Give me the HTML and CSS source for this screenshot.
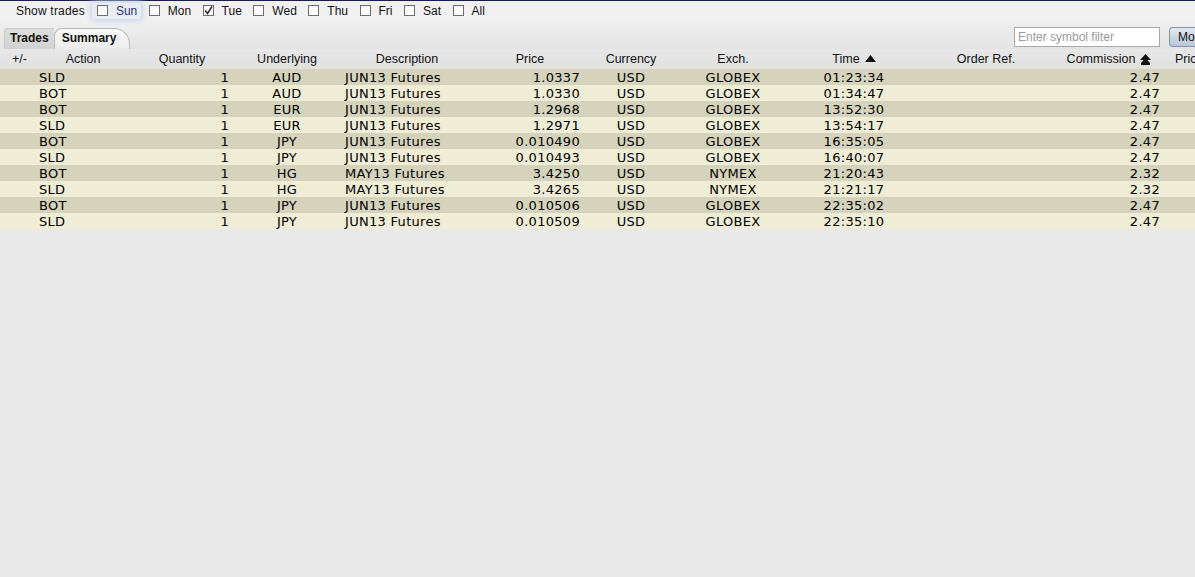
FILE: index.html
```html
<!DOCTYPE html>
<html>
<head>
<meta charset="utf-8">
<link rel="stylesheet" href="styles.css">
</head>
<body>
<div class="topbar">
  <span class="lbl">Show trades</span>
  <span class="opt focus"><span class="box"></span>Sun</span>
  <span class="opt"><span class="box"></span>Mon</span>
  <span class="opt"><span class="box checked"><svg width="9" height="9" viewBox="0 0 9 9"><path d="M1 4.5 L3.5 7.5 L8 0.5" fill="none" stroke="#222" stroke-width="1.4"/></svg></span>Tue</span>
  <span class="opt"><span class="box"></span>Wed</span>
  <span class="opt"><span class="box"></span>Thu</span>
  <span class="opt"><span class="box"></span>Fri</span>
  <span class="opt"><span class="box"></span>Sat</span>
  <span class="opt"><span class="box"></span>All</span>
</div>
<div class="tabstrip">
  <div class="tabs">
    <span class="tab trades">Trades</span>
    <span class="tab summary">Summary</span>
  </div>
  <div class="tools">
    <input class="filter" type="text" placeholder="Enter symbol filter">
    <span class="morebtn">Mo</span>
  </div>
</div>
<div class="table">
  <div class="hdr">
    <span class="h c-pm">+/-</span>
    <span class="h">Action</span>
    <span class="h">Quantity</span>
    <span class="h">Underlying</span>
    <span class="h">Description</span>
    <span class="h">Price</span>
    <span class="h">Currency</span>
    <span class="h">Exch.</span>
    <span class="h">Time <svg class="arr" width="11" height="7" viewBox="0 0 11 7"><path d="M5.5 0 L11 7 L0 7 Z" fill="#111"/></svg></span>
    <span class="h">Order Ref.</span>
    <span class="h">Commission <svg class="arr2" width="11" height="11" viewBox="0 0 11 11"><path d="M5.5 0 L11 6 L0 6 Z" fill="#111"/><path d="M5.5 4 L10 9 L1 9 Z" fill="#111"/><rect x="1" y="9" width="9" height="2" fill="#111"/></svg></span>
    <span class="h c-last">Pric</span>
  </div>
  <div class="row dark"><span></span><span class="act">SLD</span><span class="qty">1</span><span class="ctr">AUD</span><span class="desc">JUN13 Futures</span><span class="price">1.0337</span><span class="ctr">USD</span><span class="ctr">GLOBEX</span><span class="ctr">01:23:34</span><span></span><span class="comm">2.47</span><span></span></div>
  <div class="row light"><span></span><span class="act">BOT</span><span class="qty">1</span><span class="ctr">AUD</span><span class="desc">JUN13 Futures</span><span class="price">1.0330</span><span class="ctr">USD</span><span class="ctr">GLOBEX</span><span class="ctr">01:34:47</span><span></span><span class="comm">2.47</span><span></span></div>
  <div class="row dark"><span></span><span class="act">BOT</span><span class="qty">1</span><span class="ctr">EUR</span><span class="desc">JUN13 Futures</span><span class="price">1.2968</span><span class="ctr">USD</span><span class="ctr">GLOBEX</span><span class="ctr">13:52:30</span><span></span><span class="comm">2.47</span><span></span></div>
  <div class="row light"><span></span><span class="act">SLD</span><span class="qty">1</span><span class="ctr">EUR</span><span class="desc">JUN13 Futures</span><span class="price">1.2971</span><span class="ctr">USD</span><span class="ctr">GLOBEX</span><span class="ctr">13:54:17</span><span></span><span class="comm">2.47</span><span></span></div>
  <div class="row dark"><span></span><span class="act">BOT</span><span class="qty">1</span><span class="ctr">JPY</span><span class="desc">JUN13 Futures</span><span class="price">0.010490</span><span class="ctr">USD</span><span class="ctr">GLOBEX</span><span class="ctr">16:35:05</span><span></span><span class="comm">2.47</span><span></span></div>
  <div class="row light"><span></span><span class="act">SLD</span><span class="qty">1</span><span class="ctr">JPY</span><span class="desc">JUN13 Futures</span><span class="price">0.010493</span><span class="ctr">USD</span><span class="ctr">GLOBEX</span><span class="ctr">16:40:07</span><span></span><span class="comm">2.47</span><span></span></div>
  <div class="row dark"><span></span><span class="act">BOT</span><span class="qty">1</span><span class="ctr">HG</span><span class="desc">MAY13 Futures</span><span class="price">3.4250</span><span class="ctr">USD</span><span class="ctr">NYMEX</span><span class="ctr">21:20:43</span><span></span><span class="comm">2.32</span><span></span></div>
  <div class="row light"><span></span><span class="act">SLD</span><span class="qty">1</span><span class="ctr">HG</span><span class="desc">MAY13 Futures</span><span class="price">3.4265</span><span class="ctr">USD</span><span class="ctr">NYMEX</span><span class="ctr">21:21:17</span><span></span><span class="comm">2.32</span><span></span></div>
  <div class="row dark"><span></span><span class="act">BOT</span><span class="qty">1</span><span class="ctr">JPY</span><span class="desc">JUN13 Futures</span><span class="price">0.010506</span><span class="ctr">USD</span><span class="ctr">GLOBEX</span><span class="ctr">22:35:02</span><span></span><span class="comm">2.47</span><span></span></div>
  <div class="row light"><span></span><span class="act">SLD</span><span class="qty">1</span><span class="ctr">JPY</span><span class="desc">JUN13 Futures</span><span class="price">0.010509</span><span class="ctr">USD</span><span class="ctr">GLOBEX</span><span class="ctr">22:35:10</span><span></span><span class="comm">2.47</span><span></span></div>
</div>
</body>
</html>
```
FILE: styles.css
```css
html, body {
  margin: 0;
  padding: 0;
}
body {
  width: 1195px;
  height: 577px;
  overflow: hidden;
  background: #e9e9e9;
  font-family: "Liberation Sans", Arial, sans-serif;
  color: #111;
}
.topbar {
  height: 20px;
  border-top: 1px solid #1c1c4c;
  background: #f1f1f1;
  display: flex;
  align-items: center;
  padding-left: 16px;
  font-size: 12px;
  box-sizing: border-box;
}
.lbl {
  margin-right: 7px;
  letter-spacing: 0.2px;
}
.opt {
  display: flex;
  align-items: center;
  padding: 1px 4px 1px 5px;
  margin-right: 2.5px;
}
.opt.focus {
  box-shadow: 0 0 6px 2px #c9d5ea;
  background: #e8ecf3;
  border-radius: 3px;
  color: #28367a;
}
.box {
  width: 9px;
  height: 9px;
  border: 1px solid #6d6d6d;
  background: #fff;
  margin-right: 8px;
  display: flex;
  align-items: center;
  justify-content: center;
}
.tabstrip {
  height: 29px;
  background: linear-gradient(#f1f1f1, #e3e3e3);
  display: flex;
  justify-content: space-between;
  align-items: flex-end;
}
.tabs {
  display: flex;
  align-items: flex-end;
  padding-left: 4px;
}
.tab {
  font-weight: bold;
  font-size: 12px;
  height: 21px;
  line-height: 18px;
  box-sizing: border-box;
}
.tab.trades {
  background: linear-gradient(#dedede, #d2d2d2);
  padding: 0 5px 0 5px;
  border-radius: 4px 0 0 0;
  border: 1px solid #c9c9c9;
  border-bottom: none;
  border-right: none;
}
.tab.summary {
  background: linear-gradient(#fafafa, #ececec);
  padding: 0 13px 0 7px;
  border: 1px solid #b9b9b9;
  border-bottom: none;
  border-radius: 8px 16px 0 0;
}
.tools {
  display: flex;
  align-items: center;
  padding-bottom: 2px;
}
.filter {
  width: 146px;
  height: 20px;
  box-sizing: border-box;
  border: 1px solid #aaa;
  background: #fff;
  font-family: "Liberation Sans", Arial, sans-serif;
  font-size: 12px;
  padding: 0 3px;
  margin: 0 9px 0 0;
  outline: none;
}
.filter::placeholder {
  color: #9a9a9a;
}
.morebtn {
  width: 26px;
  height: 20px;
  box-sizing: border-box;
  border: 1px solid #8596ab;
  border-right: none;
  border-radius: 4px 0 0 4px;
  background: linear-gradient(#e2e8f0, #b9c7d7);
  font-size: 12px;
  line-height: 18px;
  padding-left: 8px;
  overflow: hidden;
  white-space: nowrap;
}
.hdr, .row {
  display: grid;
  grid-template-columns: 38px 90px 108px 102px 138px 108px 94px 110px 132px 132px 114px 29px;
}
.hdr {
  height: 20px;
  background: linear-gradient(#e8e8e8, #e0e0e0);
  font-size: 12.5px;
  align-items: center;
}
.h {
  text-align: center;
  white-space: nowrap;
  overflow: hidden;
  display: flex;
  align-items: center;
  justify-content: center;
  gap: 5px;
}
.h.c-pm {
  justify-content: flex-start;
  padding-left: 12px;
}
.h.c-last {
  justify-content: flex-start;
  padding-left: 9px;
}
.arr {
  margin-top: -1px;
}
.row {
  height: 16px;
  line-height: 18px;
  font-family: "DejaVu Sans", Tahoma, sans-serif;
  font-size: 13px;
  letter-spacing: 0.3px;
  color: #000;
}
.row span {
  white-space: nowrap;
  overflow: hidden;
}
.row.dark {
  background: #d5d3bb;
}
.row.light {
  background: #efedd6;
}
.act {
  padding-left: 1px;
}
.qty {
  text-align: right;
  padding-right: 7px;
}
.ctr {
  text-align: center;
}
.desc {
  padding-left: 7px;
}
.price {
  text-align: right;
  padding-right: 4px;
}
.comm {
  text-align: right;
  padding-right: 6px;
}
```
